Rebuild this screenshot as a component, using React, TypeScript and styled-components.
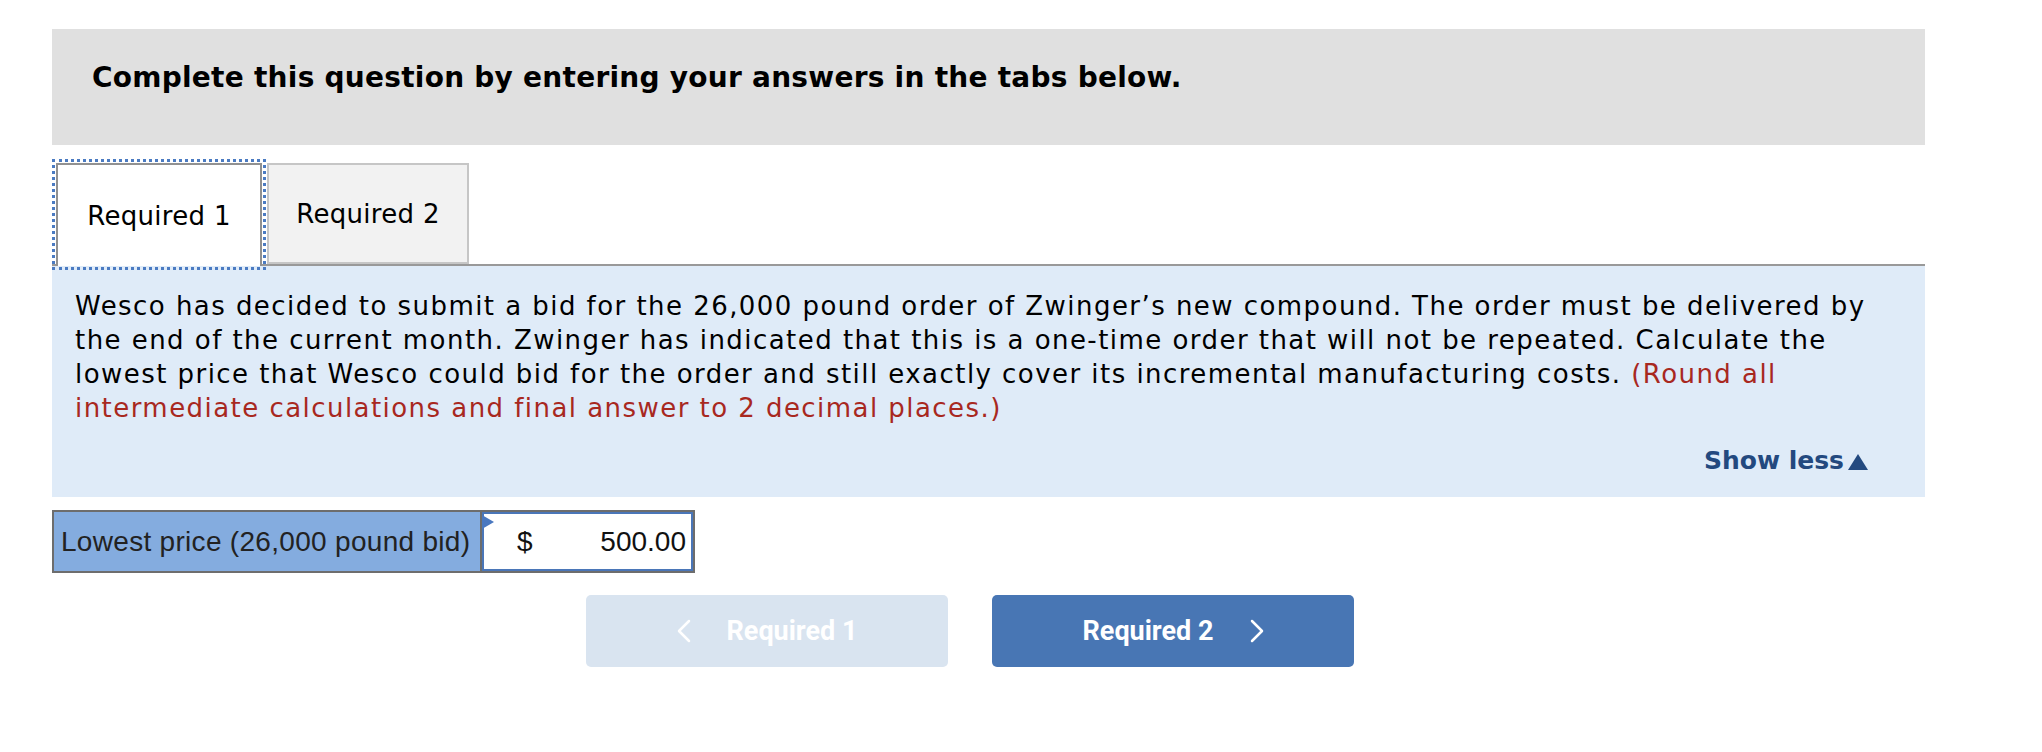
import React from "react";
import styled, { createGlobalStyle } from "styled-components";

const GlobalStyle = createGlobalStyle`
  html, body {
    margin: 0;
    padding: 0;
    background: #fff;
  }
  body {
    font-family: "DejaVu Sans", Verdana, sans-serif;
    color: #000;
  }
`;

const Page = styled.div`
  padding: 29px 0 0 52px;
  width: 1873px;
`;

const Header = styled.div`
  box-sizing: border-box;
  height: 116px;
  background: #e0e0e0;
  padding: 33px 40px 0;
  font-size: 28px;
  font-weight: bold;
  line-height: 1.164;
  letter-spacing: 0.25px;
`;

const TabRow = styled.div`
  margin-top: 18px;
  height: 101px;
  display: flex;
  align-items: flex-end;
  border-bottom: 2px solid #999;
`;

const Tab = styled.button<{ $active?: boolean }>`
  box-sizing: border-box;
  width: ${(p) => (p.$active ? 206 : 202)}px;
  height: ${(p) => (p.$active ? 103 : 101)}px;
  margin: 0 0 ${(p) => (p.$active ? -2 : 0)}px ${(p) => (p.$active ? 4 : 5)}px;
  padding: 0;
  font-family: "DejaVu Sans", Verdana, sans-serif;
  font-size: 26px;
  letter-spacing: 0.3px;
  color: #000;
  background: ${(p) => (p.$active ? "#fff" : "#f2f2f2")};
  border: 2px solid ${(p) => (p.$active ? "#919191" : "#c6c6c6")};
  border-bottom: ${(p) => (p.$active ? "none" : "2px solid #c6c6c6")};
  outline: ${(p) => (p.$active ? "3px dotted #4b7bc2" : "none")};
  outline-offset: 1px;
  cursor: pointer;
`;

const Panel = styled.div`
  background: #dfebf8;
  padding: 23px 56px 21px 23px;
`;

const Prompt = styled.p`
  margin: 0 -40px 0 0;
  font-size: 26px;
  line-height: 34px;
  letter-spacing: 1.45px;
  white-space: nowrap;
`;

const Note = styled.span`
  color: #a8281f;
`;

const ShowLessRow = styled.div`
  margin-top: 21px;
  display: flex;
  justify-content: flex-end;
`;

const ShowLess = styled.a`
  display: flex;
  align-items: center;
  gap: 3px;
  font-size: 25px;
  line-height: 30px;
  font-weight: bold;
  color: #23497f;
  cursor: pointer;
  svg {
    margin-top: 2px;
  }
`;

const AnswerRow = styled.div`
  margin-top: 13px;
  box-sizing: border-box;
  height: 63px;
  width: fit-content;
  display: flex;
  border: 2px solid #6d6d6d;
`;

const AnswerLabel = styled.div`
  box-sizing: border-box;
  width: 428px;
  padding-left: 7px;
  display: flex;
  align-items: center;
  background: #84acdf;
  border-right: 2px solid #6d6d6d;
  font-family: "Liberation Sans", Arial, sans-serif;
  font-size: 28px;
  letter-spacing: 0.3px;
  color: #222;
`;

const AnswerCell = styled.div`
  position: relative;
  box-sizing: border-box;
  width: 211px;
  padding: 0 5px 0 33px;
  display: flex;
  align-items: center;
  justify-content: space-between;
  background: #fff;
  border: 2px solid #4a76b8;
  font-family: "Liberation Sans", Arial, sans-serif;
  font-size: 28px;
  color: #111;
`;

const Marker = styled.span`
  position: absolute;
  top: 1px;
  left: -2px;
  width: 0;
  height: 0;
  border-left: 12px solid #4a78c0;
  border-top: 7px solid transparent;
  border-bottom: 7px solid transparent;
`;

const NavRow = styled.div`
  margin-top: 22px;
  padding-right: 37px;
  display: flex;
  justify-content: center;
  gap: 44px;
`;

const NavButton = styled.button<{ $muted?: boolean }>`
  width: 362px;
  height: 72px;
  display: flex;
  align-items: center;
  justify-content: center;
  gap: 36px;
  border: none;
  border-radius: 5px;
  background: ${(p) => (p.$muted ? "#d9e4f0" : "#4876b4")};
  color: #fff;
  font-family: Roboto, "Liberation Sans", sans-serif;
  font-weight: 700;
  font-size: 27px;
  cursor: ${(p) => (p.$muted ? "default" : "pointer")};
`;

const Chevron = ({ dir }: { dir: "left" | "right" }) => (
  <svg width="14" height="24" viewBox="0 0 14 24">
    <polyline
      points={dir === "left" ? "12,2 2,12 12,22" : "2,2 12,12 2,22"}
      fill="none"
      stroke="#fff"
      strokeWidth="2.5"
      strokeLinecap="round"
      strokeLinejoin="round"
    />
  </svg>
);

export default function App() {
  return (
    <Page>
      <GlobalStyle />
      <Header>Complete this question by entering your answers in the tabs below.</Header>
      <TabRow>
        <Tab $active>Required 1</Tab>
        <Tab>Required 2</Tab>
      </TabRow>
      <Panel>
        <Prompt>
          Wesco has decided to submit a bid for the 26,000 pound order of Zwinger’s new
          compound. The order must be delivered by
          <br />
          the end of the current month. Zwinger has indicated that this is a one-time order
          that will not be repeated. Calculate the
          <br />
          lowest price that Wesco could bid for the order and still exactly cover its
          incremental manufacturing costs. <Note>(Round all</Note>
          <br />
          <Note>intermediate calculations and final answer to 2 decimal places.)</Note>
        </Prompt>
        <ShowLessRow>
          <ShowLess>
            Show less
            <svg width="22" height="18" viewBox="0 0 22 18">
              <polygon points="11,1 21,17 1,17" fill="#23497f" />
            </svg>
          </ShowLess>
        </ShowLessRow>
      </Panel>
      <AnswerRow>
        <AnswerLabel>Lowest price (26,000 pound bid)</AnswerLabel>
        <AnswerCell>
          <Marker />
          <span>$</span>
          <span>500.00</span>
        </AnswerCell>
      </AnswerRow>
      <NavRow>
        <NavButton $muted>
          <Chevron dir="left" />
          Required 1
        </NavButton>
        <NavButton>
          Required 2
          <Chevron dir="right" />
        </NavButton>
      </NavRow>
    </Page>
  );
}
